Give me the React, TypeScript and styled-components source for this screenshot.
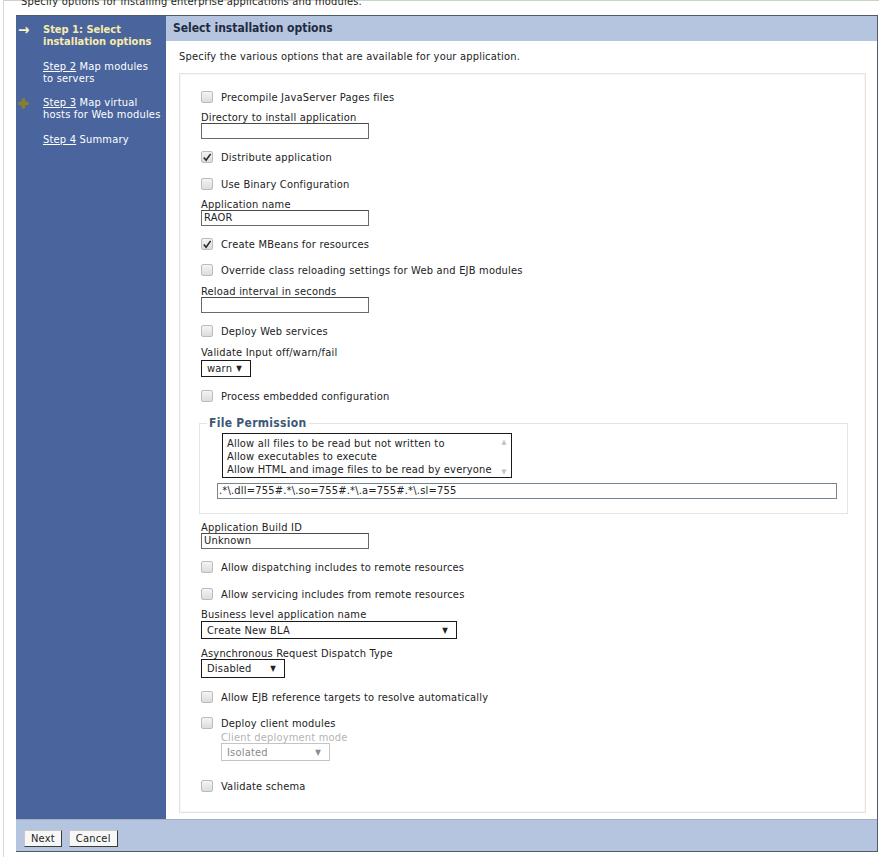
import styled, { createGlobalStyle } from 'styled-components';

const font = `"DejaVu Sans Condensed", "DejaVu Sans", sans-serif`;

const GlobalStyle = createGlobalStyle`
  body {
    margin: 0;
    background: #fff;
    font-family: ${font};
    font-size: 11px;
    letter-spacing: 0.2px;
    color: #222;
  }
`;

const App = () => {
  return (
    <>
      <GlobalStyle />
      <Page>
        <Intro>Specify options for installing enterprise applications and modules.</Intro>
        <Wizard>
          <Nav>
            <StepList>
              <Step>
                <Marker><Arrow>→</Arrow></Marker>
                <StepText $current>Step 1: Select installation options</StepText>
              </Step>
              <Step>
                <Marker />
                <StepText><StepLink>Step 2</StepLink> Map modules<br />to servers</StepText>
              </Step>
              <Step>
                <Marker>
                  <svg width="11" height="11" viewBox="0 0 11 11">
                    <path d="M5.5 1.8 L5.5 9.2 M1.8 5.5 L9.2 5.5" stroke="#85812d" strokeWidth="3.6" strokeLinecap="round" />
                  </svg>
                </Marker>
                <StepText><StepLink>Step 3</StepLink> Map virtual<br />hosts for Web modules</StepText>
              </Step>
              <Step>
                <Marker />
                <StepText><StepLink>Step 4</StepLink> Summary</StepText>
              </Step>
            </StepList>
          </Nav>
          <Main>
            <Header>Select installation options</Header>
            <Body>
              <Lead>Specify the various options that are available for your application.</Lead>
              <Panel>
                <Check $top={16} label="Precompile JavaServer Pages files" />
                <FieldLabel $top={7}>Directory to install application</FieldLabel>
                <TextInput />
                <Check $top={11} checked label="Distribute application" />
                <Check $top={13} label="Use Binary Configuration" />
                <FieldLabel $top={7}>Application name</FieldLabel>
                <TextInput>RAOR</TextInput>
                <Check $top={11} checked label="Create MBeans for resources" />
                <Check $top={12} label="Override class reloading settings for Web and EJB modules" />
                <FieldLabel $top={8}>Reload interval in seconds</FieldLabel>
                <TextInput />
                <Check $top={11} label="Deploy Web services" />
                <FieldLabel $top={8}>Validate Input off/warn/fail</FieldLabel>
                <Select $width={50} $height={17} $top={2}>warn<Caret>▼</Caret></Select>
                <Check $top={12} label="Process embedded configuration" />
                <Fieldset>
                  <Legend>File Permission</Legend>
                  <ListBox>
                    <ListLines>
                      <div>Allow all files to be read but not written to</div>
                      <div>Allow executables to execute</div>
                      <div>Allow HTML and image files to be read by everyone</div>
                    </ListLines>
                    <ScrollArrows>
                      <span>▲</span>
                      <span>▼</span>
                    </ScrollArrows>
                  </ListBox>
                  <WideInput>.*\.dll=755#.*\.so=755#.*\.a=755#.*\.sl=755</WideInput>
                </Fieldset>
                <FieldLabel $top={7}>Application Build ID</FieldLabel>
                <TextInput>Unknown</TextInput>
                <Check $top={11} label="Allow dispatching includes to remote resources" />
                <Check $top={13} label="Allow servicing includes from remote resources" />
                <FieldLabel $top={7}>Business level application name</FieldLabel>
                <Select $width={256} $height={18} $top={1}>Create New BLA<Caret>▼</Caret></Select>
                <FieldLabel $top={8}>Asynchronous Request Dispatch Type</FieldLabel>
                <Select $width={84} $height={19} $top={0}>Disabled<Caret>▼</Caret></Select>
                <Check $top={12} label="Allow EJB reference targets to resolve automatically" />
                <Check $top={12} label="Deploy client modules" />
                <Indent>
                  <FieldLabel $top={1} $muted>Client deployment mode</FieldLabel>
                  <Select $width={109} $height={18} $top={0} $disabled>Isolated<Caret>▼</Caret></Select>
                </Indent>
                <Check $top={18} label="Validate schema" />
              </Panel>
            </Body>
          </Main>
          <Footer>
            <Button>Next</Button>
            <Button>Cancel</Button>
          </Footer>
        </Wizard>
      </Page>
    </>
  );
};

const Check = ({ label, checked, $top }: { label: string; checked?: boolean; $top: number }) => (
  <CheckRow $top={$top}>
    <Box>
      {checked && (
        <svg width="11" height="11" viewBox="0 0 11 11">
          <path d="M2 5.5 L4.5 8.5 L9.5 1.5" stroke="#2a2a2a" strokeWidth="1.8" fill="none" />
        </svg>
      )}
    </Box>
    <span>{label}</span>
  </CheckRow>
);

const Page = styled.div`
  margin-left: 3px;
  border-left: 1px solid #d6d6d6;
  border-top: 1px solid #cdd3c6;
  min-height: 856px;
  padding-left: 12px;
`;

const Intro = styled.div`
  margin-top: -5px;
  height: 12px;
  line-height: 12px;
  padding-left: 5px;
  white-space: nowrap;
`;

const Wizard = styled.div`
  margin-top: 7px;
  width: 862px;
  height: 837px;
  box-sizing: border-box;
  border-top: 1px solid #4f5d69;
  border-right: 1px solid #4f5d69;
  border-bottom: 1px solid #4f5d69;
  display: grid;
  grid-template-columns: 150px 1fr;
  grid-template-rows: 1fr 32px;
`;

const Nav = styled.nav`
  background: #4a659d;
  padding-top: 8px;
`;

const StepList = styled.div`
  display: flex;
  flex-direction: column;
  gap: 12.5px;
`;

const Step = styled.div`
  display: flex;
  align-items: flex-start;
`;

const Marker = styled.div`
  width: 25px;
  height: 12px;
  padding-left: 2px;
  flex: none;
  display: flex;
  align-items: center;
`;

const Arrow = styled.span`
  color: #fbf2c0;
  font-weight: bold;
  font-size: 15px;
  line-height: 12px;
`;

const StepText = styled.div<{ $current?: boolean }>`
  width: 120px;
  color: ${p => (p.$current ? '#f8ecaa' : '#ffffff')};
  font-weight: ${p => (p.$current ? 'bold' : 'normal')};
  letter-spacing: ${p => (p.$current ? '0' : '0.2px')};
  line-height: 12px;
`;

const StepLink = styled.span`
  text-decoration: underline;
`;

const Main = styled.main`
  background: #fff;
  display: flex;
  flex-direction: column;
`;

const Header = styled.div`
  height: 25px;
  line-height: 25px;
  background: #b6c5df;
  color: #1d2b42;
  font-weight: bold;
  font-size: 12px;
  letter-spacing: 0;
  padding-left: 7px;
`;

const Body = styled.div`
  padding: 0 11px 6px 13px;
  flex: 1;
  display: flex;
  flex-direction: column;
`;

const Lead = styled.div`
  margin-top: 9px;
  line-height: 13px;
`;

const Panel = styled.div`
  margin-top: 10px;
  flex: 1;
  border: 1px solid #e4e4e4;
  box-shadow: inset 0 0 0 1px #f6f6f6;
  padding: 0 16px 0 21px;
`;

const CheckRow = styled.label<{ $top: number }>`
  margin-top: ${p => p.$top}px;
  height: 14px;
  display: flex;
  align-items: center;
  gap: 8px;
`;

const Box = styled.span`
  width: 12px;
  height: 12px;
  box-sizing: border-box;
  border: 1px solid #bcbcbc;
  border-radius: 2px;
  background: linear-gradient(#f4f4f4, #dcdcdc);
  display: flex;
  align-items: center;
  justify-content: center;
  flex: none;
`;

const FieldLabel = styled.div<{ $top: number; $muted?: boolean }>`
  margin-top: ${p => p.$top}px;
  height: 12px;
  line-height: 14px;
  color: ${p => (p.$muted ? '#b4b4b4' : '#222')};
`;

const TextInput = styled.div`
  width: 168px;
  height: 16px;
  box-sizing: border-box;
  border: 1px solid #6a6a6a;
  border-top-color: #4a4a4a;
  padding-left: 2px;
  line-height: 14px;
`;

const Select = styled.div<{ $width: number; $height: number; $top: number; $disabled?: boolean }>`
  margin-top: ${p => p.$top}px;
  width: ${p => p.$width}px;
  height: ${p => p.$height}px;
  box-sizing: border-box;
  border: 1px solid ${p => (p.$disabled ? '#c4c4c4' : '#1a1a1a')};
  color: ${p => (p.$disabled ? '#8a8a8a' : '#222')};
  display: flex;
  align-items: center;
  justify-content: space-between;
  padding: 0 8px 0 5px;
`;

const Caret = styled.span`
  font-size: 8px;
`;

const Indent = styled.div`
  padding-left: 20px;
`;

const Fieldset = styled.fieldset`
  margin: 13px 0 0 -2px;
  width: 649px;
  box-sizing: border-box;
  border: 1px solid #e4e4e4;
  padding: 3px 10px 14px 17px;
`;

const Legend = styled.legend`
  margin-left: -10px;
  padding: 0 2px;
  font-weight: bold;
  font-size: 12px;
  letter-spacing: 0.3px;
  line-height: 14px;
  color: #3d5876;
`;

const ListBox = styled.div`
  margin-left: 5px;
  width: 290px;
  height: 45px;
  box-sizing: border-box;
  border: 1px solid #1a1a1a;
  display: flex;
  justify-content: space-between;
`;

const ListLines = styled.div`
  padding: 3px 0 0 4px;
  line-height: 13px;
  white-space: nowrap;
`;

const ScrollArrows = styled.div`
  width: 14px;
  display: flex;
  flex-direction: column;
  justify-content: space-between;
  align-items: center;
  font-size: 7px;
  color: #c2c2c2;
  padding: 4px 0 1px;
`;

const WideInput = styled.div`
  margin-top: 5px;
  width: 620px;
  height: 16px;
  box-sizing: border-box;
  border: 1px solid #76858f;
  padding-left: 1px;
  line-height: 14px;
`;

const Footer = styled.div`
  grid-column: 1 / -1;
  background: #b6c5df;
  border-top: 1px solid #a3afc3;
  padding: 10px 0 0 8px;
  display: flex;
  align-items: flex-start;
  gap: 7px;
`;

const Button = styled.button`
  font-family: ${font};
  font-size: 11px;
  letter-spacing: 0.2px;
  height: 17px;
  padding: 0 6px;
  line-height: 15px;
  background: #f7f7f7;
  color: #222;
  border: 1px solid #c8c8c8;
  border-right-color: #3c3c3c;
  border-bottom-color: #3c3c3c;
  border-radius: 0;
`;

export default App;
